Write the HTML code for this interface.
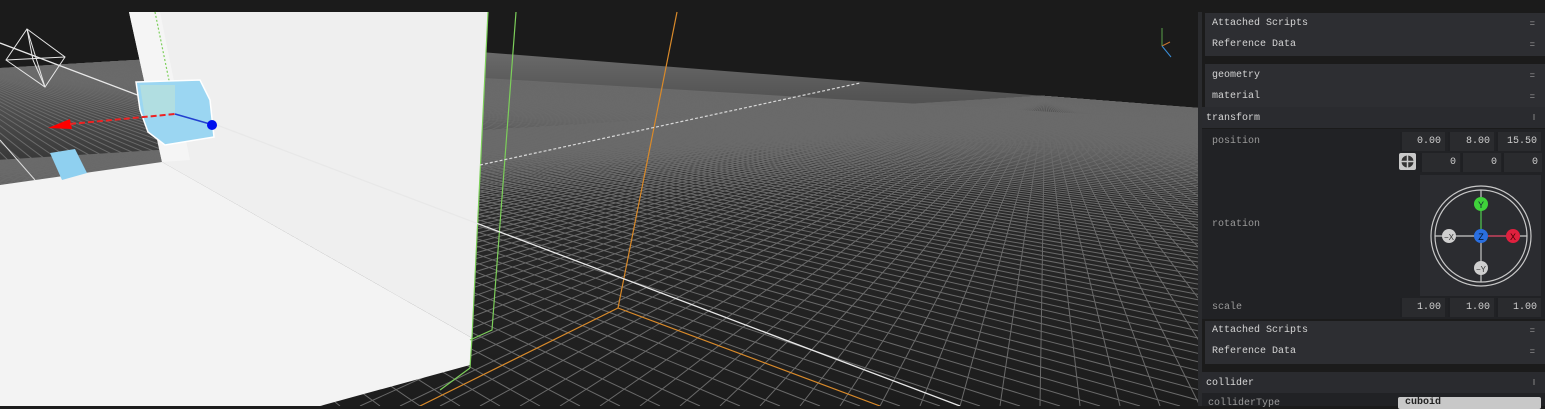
<!DOCTYPE html>
<html><head><meta charset="utf-8"><style>
html,body{margin:0;padding:0;width:1545px;height:406px;overflow:hidden;background:#1b1b1b;font-family:"Liberation Mono",monospace;}
svg.vp{position:absolute;left:0;top:0}
.panel{position:absolute;left:1198px;top:0;width:347px;height:406px;background:#1b1b1b;}
.strip{position:absolute;left:0;top:12px;width:4px;height:394px;background:#2a2b2e}
.box{position:absolute;left:7px;width:340px;background:#2d2e32;}
.row{position:absolute;left:7px;font-size:10px;color:#d4d4d4;}
.eq{position:absolute;right:10px;font-size:9px;color:#9a9a9a}
.hdr{position:absolute;left:4px;width:343px;height:21px;background:#2a2b2f;font-size:10px;color:#d8d8d8}
.hdr span{position:absolute;left:4px;top:6px}
.props{position:absolute;left:4px;top:129px;width:343px;height:190px;background:#212225}
.lbl{position:absolute;left:10px;font-size:10px;color:#9a9a9a}
.in{position:absolute;height:19px;background:#2a2b2e;border-left:2px solid #1f2023;box-sizing:border-box;font-size:10px;color:#d0d0d0;text-align:right;padding-right:4px;line-height:19px}
</style></head><body>
<svg class="vp" width="1200" height="406" viewBox="0 0 1200 406">
<defs>
<linearGradient id="fl" x1="0" y1="0" x2="0" y2="1" gradientUnits="objectBoundingBox">
<stop offset="0" stop-color="#6a6a6a"/><stop offset="0.12" stop-color="#555"/><stop offset="0.4" stop-color="#2a2a2a"/><stop offset="1" stop-color="#1c1c1c"/></linearGradient>
<clipPath id="cp"><polygon points="0,68 135,60 480,52 1200,108 1200,406 0,406"/></clipPath>
</defs>
<rect width="1200" height="406" fill="#1b1b1b"/>
<polygon points="0,68 135,60 480,52 1200,108 1200,406 0,406" fill="url(#fl)"/>
<g id="grid" clip-path="url(#cp)" stroke="#6a6a6a" stroke-width="1"></g>
<polygon points="0,185 162,162 472,338 470,365 320,406 0,406" fill="#f3f3f3"/>
<polygon points="129,12 488,12 472,338 162,162" fill="#efefef"/>
<polygon points="129,12 160,12 190,160 162,162" fill="#f5f5f5"/>
<g stroke="#7ccf5a" stroke-width="1.2" fill="none">
<polyline points="516,12 492,330 470,340"/><line x1="488" y1="12" x2="472" y2="338"/>
<line x1="155" y1="12" x2="172" y2="95" stroke-dasharray="2,2"/>
<line x1="472" y1="338" x2="470" y2="368"/>
<polyline points="470,368 440,390" />
</g>
<g stroke="#d98a2a" stroke-width="1.2" fill="none">
<polyline points="677,12 618,308 420,406"/><line x1="618" y1="308" x2="880" y2="406"/>
</g>
<line x1="0" y1="43" x2="960" y2="406" stroke="#e8e8e8" stroke-width="1.3"/>
<line x1="480" y1="165" x2="860" y2="83" stroke="#d8d8d8" stroke-width="1.2" stroke-dasharray="3,2"/>
<line x1="0" y1="140" x2="35" y2="180" stroke="#dcdcdc"/>
<g stroke="#e6e6e6" stroke-width="1" fill="none">
<polygon points="27,29 65,57 45,87 6,60"/><line x1="27" y1="29" x2="45" y2="87"/><line x1="6" y1="60" x2="65" y2="57"/><line x1="33" y1="60" x2="27" y2="29"/><line x1="33" y1="60" x2="45" y2="87"/>
</g>
<polygon points="136,82 200,80 210,100 214,137 165,145 148,132 140,110" fill="#9bd6f2" stroke="#fff" stroke-width="1.5"/>
<polygon points="140,85 175,85 175,112 145,118" fill="#b6e0dc" opacity="0.8"/>
<polygon points="50,153 75,149 87,173 62,180" fill="#8fd0f0"/>
<polygon points="48,128 70,119 72,129" fill="#f00"/>
<line x1="70" y1="124" x2="175" y2="114" stroke="#e22" stroke-width="2" stroke-dasharray="6,3"/>
<line x1="175" y1="114" x2="210" y2="124" stroke="#2240d0" stroke-width="1.5"/>
<circle cx="212" cy="125" r="5" fill="#0010ee"/>
<line x1="1162" y1="28" x2="1162" y2="46" stroke="#5aa04a"/><line x1="1162" y1="46" x2="1170" y2="42" stroke="#c87530"/><line x1="1162" y1="46" x2="1171" y2="57" stroke="#3a8ed8"/>
</svg>
<script>
(function(){var g=document.getElementById('grid'),s='';
var A=[1045,96],B=[-112,43];
for(var x=-4000;x<=5000;x+=40){s+='<line x1="'+A[0]+'" y1="'+A[1]+'" x2="'+x+'" y2="406"/>';}
for(var x=-1500;x<=6000;x+=40){s+='<line x1="'+B[0]+'" y1="'+B[1]+'" x2="'+x+'" y2="406"/>';}
g.innerHTML=s;})();
</script>
<div class="panel">
<div class="strip"></div>
<div class="box" style="top:13px;height:43px"></div>
<div class="row" style="top:18px;left:14px">Attached Scripts</div><div class="eq" style="top:19px">=</div>
<div class="row" style="top:39px;left:14px">Reference Data</div><div class="eq" style="top:40px">=</div>
<div class="box" style="top:64px;height:44px"></div>
<div class="row" style="top:70px;left:14px">geometry</div><div class="eq" style="top:71px">=</div>
<div class="row" style="top:91px;left:14px">material</div><div class="eq" style="top:92px">=</div>
<div class="hdr" style="top:107px"><span>transform</span><span style="left:auto;right:10px;font-size:8px;color:#999">‖</span></div>
<div class="props">
<div class="lbl" style="top:7px">position</div>
<div class="in" style="left:198px;top:3px;width:45px">0.00</div>
<div class="in" style="left:246px;top:3px;width:46px">8.00</div>
<div class="in" style="left:294px;top:3px;width:45px">15.50</div>
<div style="position:absolute;left:197px;top:24px;width:17px;height:17px;background:#c9c9c9;border-radius:2px"><svg width="17" height="17"><circle cx="8.5" cy="8.5" r="6" fill="#333"/><line x1="8.5" y1="2.5" x2="8.5" y2="14.5" stroke="#c9c9c9" stroke-width="1.5"/><line x1="2.5" y1="8.5" x2="14.5" y2="8.5" stroke="#c9c9c9" stroke-width="1.5"/></svg></div>
<div class="in" style="left:218px;top:24px;width:40px">0</div>
<div class="in" style="left:259px;top:24px;width:40px">0</div>
<div class="in" style="left:300px;top:24px;width:40px">0</div>
<div style="position:absolute;left:218px;top:46px;width:121px;height:121px;background:#2b2c30">
<svg width="121" height="121">
<circle cx="61" cy="61" r="50" fill="none" stroke="#c8c8c8" stroke-width="1.2"/>
<circle cx="61" cy="61" r="46" fill="none" stroke="#c8c8c8" stroke-width="1.2"/>
<line x1="15" y1="61" x2="107" y2="61" stroke="#c8c8c8" stroke-width="1.2"/>
<line x1="61" y1="15" x2="61" y2="107" stroke="#c8c8c8" stroke-width="1.2"/>
<line x1="61" y1="29" x2="61" y2="61" stroke="#3db83d" stroke-width="1.2"/>
<line x1="61" y1="61" x2="93" y2="61" stroke="#d03050" stroke-width="1.2"/>
<circle cx="61" cy="29" r="7" fill="#3fd23a"/><text x="61" y="33" font-size="9" text-anchor="middle" fill="#123" font-family="Liberation Sans">Y</text>
<circle cx="93" cy="61" r="7" fill="#e0203e"/><text x="93" y="65" font-size="9" text-anchor="middle" fill="#400" font-family="Liberation Sans">X</text>
<circle cx="61" cy="61" r="7" fill="#2a6fe0"/><text x="61" y="65" font-size="9" text-anchor="middle" fill="#012" font-family="Liberation Sans">Z</text>
<circle cx="29" cy="61" r="7" fill="#cfcfcf"/><text x="29" y="65" font-size="8" text-anchor="middle" fill="#333" font-family="Liberation Sans">−X</text>
<circle cx="61" cy="93" r="7" fill="#cfcfcf"/><text x="61" y="97" font-size="8" text-anchor="middle" fill="#333" font-family="Liberation Sans">−Y</text>
</svg></div>
<div class="lbl" style="top:90px">rotation</div>
<div class="lbl" style="top:173px">scale</div>
<div class="in" style="left:198px;top:169px;width:45px">1.00</div>
<div class="in" style="left:246px;top:169px;width:46px">1.00</div>
<div class="in" style="left:294px;top:169px;width:45px">1.00</div>
</div>
<div class="box" style="top:321px;height:43px"></div>
<div class="row" style="top:325px;left:14px">Attached Scripts</div><div class="eq" style="top:326px">=</div>
<div class="row" style="top:346px;left:14px">Reference Data</div><div class="eq" style="top:347px">=</div>
<div class="hdr" style="top:372px;height:21px"><span>collider</span><span style="left:auto;right:10px;font-size:8px;color:#999">‖</span></div>
<div style="position:absolute;left:4px;top:393px;width:343px;height:13px;background:#212225"></div>
<div class="lbl" style="top:398px">colliderType</div>
<div style="position:absolute;left:200px;top:397px;width:143px;height:12px;background:#c8c8c8;border-radius:2px;font-size:10px;color:#222;padding-left:7px;box-sizing:border-box;font-weight:bold">cuboid</div>
</div>
</body></html>
